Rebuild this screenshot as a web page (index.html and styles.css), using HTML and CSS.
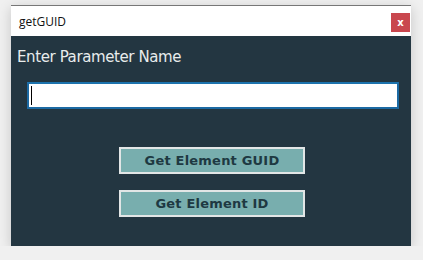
FILE: index.html
```html
<!DOCTYPE html>
<html lang="en">
<head>
    <meta charset="UTF-8">
    <title>getGUID</title>
    <link rel="stylesheet" href="styles.css">
</head>
<body>
    <div class="window">
        <div class="titlebar">
            <span class="title">getGUID</span>
            <button class="close" type="button">x</button>
        </div>
        <div class="content">
            <p class="label">Enter Parameter Name</p>
            <div class="field">
                <input type="text" class="param">
                <span class="caret"></span>
            </div>
            <div class="actions">
                <button class="action" type="button">Get Element GUID</button>
                <button class="action" type="button">Get Element ID</button>
            </div>
        </div>
    </div>
</body>
</html>
```

FILE: styles.css
```css
body {
    margin: 0;
    background-color: #f0f0f0;
    font-family: "Open Sans", "Noto Sans", sans-serif;
}

.window {
    width: 400px;
    margin: 5px 0 0 11px;
    border-top: 1px solid #777;
    box-shadow: 0 3px 12px rgba(0, 0, 0, 0.18);
}

/* Title bar */
.titlebar {
    height: 30px;
    background: #fff;
    display: flex;
    align-items: center;
    justify-content: space-between;
    padding: 0 1px 0 8px;
}

.title {
    font-size: 12px;
    color: #111;
}

.close {
    width: 19px;
    height: 19px;
    margin-top: 2px;
    padding: 0;
    border: none;
    background: #c9474e;
    color: #fff;
    font-family: "DejaVu Sans", sans-serif;
    font-size: 10px;
    font-weight: bold;
    line-height: 17px;
}

/* Body */
.content {
    background: #233641;
    height: 210px;
    padding: 0 12px 0 6px;
    box-sizing: border-box;
}

.label {
    margin: 0;
    padding-top: 12px;
    height: 18px;
    font-family: "DejaVu Sans", sans-serif;
    font-size: 15px;
    line-height: 18px;
    letter-spacing: -0.4px;
    color: #e8ecec;
}

.field {
    position: relative;
    margin: 16px 0 0 10px;
}

.param {
    display: block;
    width: 372px;
    height: 27px;
    box-sizing: border-box;
    margin: 0;
    border: 2px solid #1c6aa3;
    border-top-color: #1d73ad;
    background: #fff;
    outline: none;
    padding: 0 2px;
    font-size: 14px;
}

.caret {
    position: absolute;
    left: 4px;
    top: 4px;
    width: 1px;
    height: 19px;
    background: #000;
}

.actions {
    display: flex;
    flex-direction: column;
    align-items: flex-start;
    gap: 16px;
    padding: 38px 0 0 102px;
}

.action {
    width: 186px;
    height: 27px;
    box-sizing: border-box;
    border: 2px solid #e2e6e6;
    background: #78aeae;
    color: #1e3942;
    font-family: "DejaVu Sans", sans-serif;
    font-weight: bold;
    font-size: 13px;
    letter-spacing: 0.2px;
    padding: 0;
}
```
